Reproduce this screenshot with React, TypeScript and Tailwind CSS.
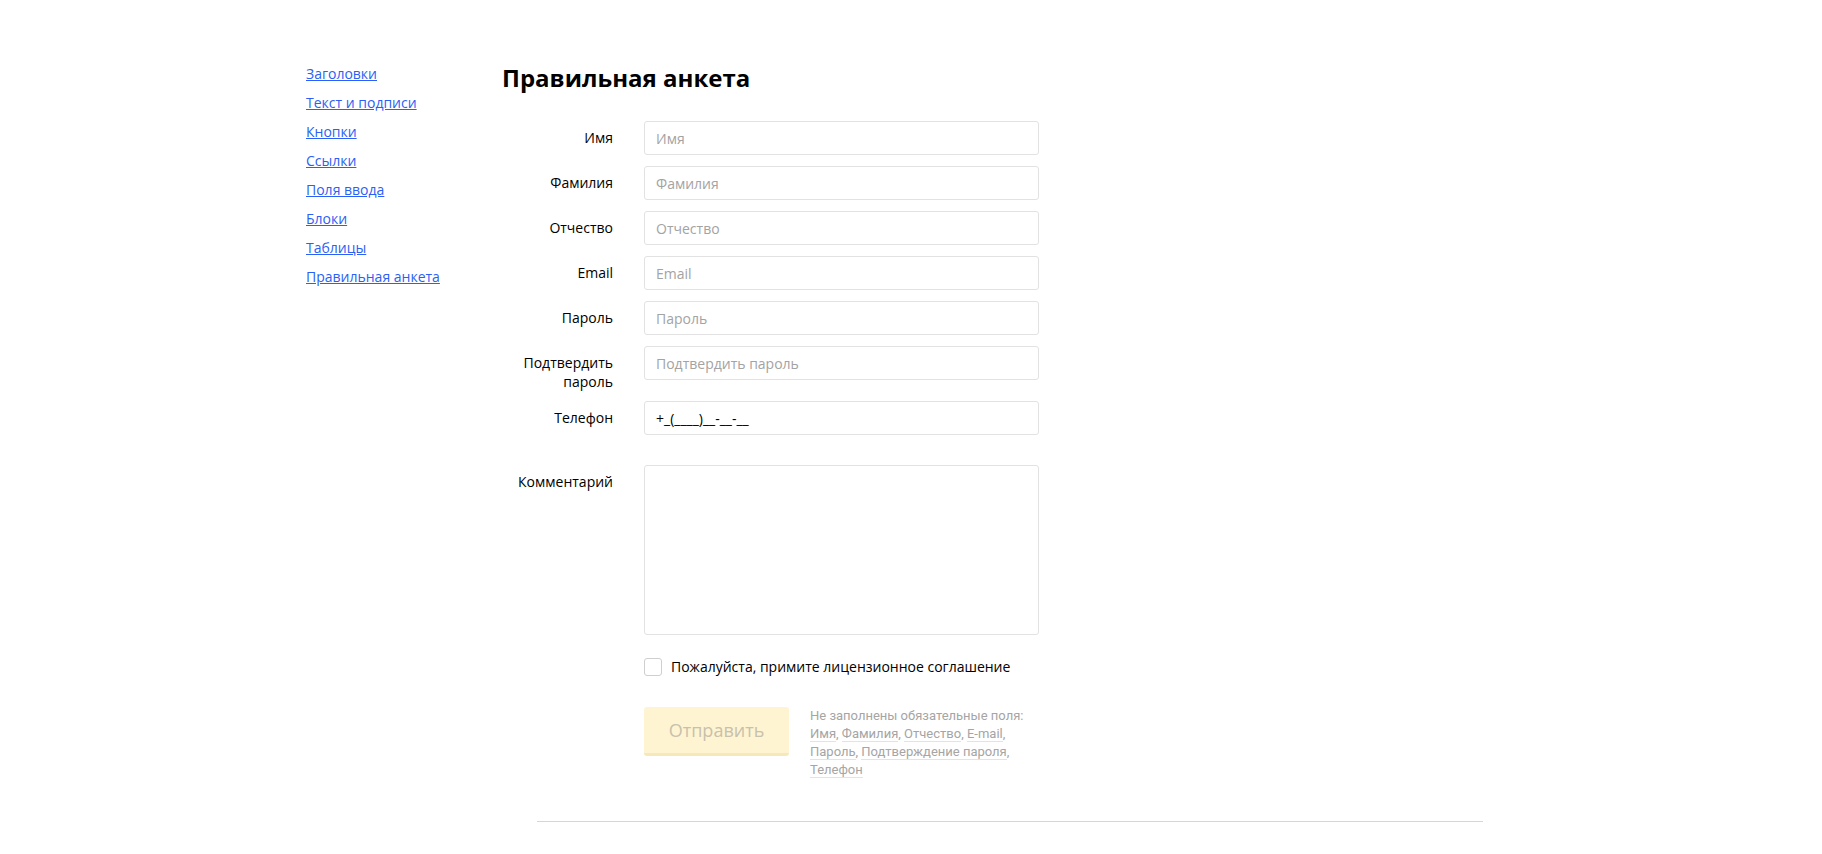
import { useState } from "react";

const navLinks = [
  "Заголовки",
  "Текст и подписи",
  "Кнопки",
  "Ссылки",
  "Поля ввода",
  "Блоки",
  "Таблицы",
  "Правильная анкета",
];

const fields = [
  { label: "Имя", placeholder: "Имя", type: "text" },
  { label: "Фамилия", placeholder: "Фамилия", type: "text" },
  { label: "Отчество", placeholder: "Отчество", type: "text" },
  { label: "Email", placeholder: "Email", type: "email" },
  { label: "Пароль", placeholder: "Пароль", type: "password" },
  { label: "Подтвердить пароль", placeholder: "Подтвердить пароль", type: "password" },
];

const missing = [
  ["Имя", "Фамилия", "Отчество", "E-mail"],
  ["Пароль", "Подтверждение пароля"],
  ["Телефон"],
];

function Row({ label, children }: { label: string; children: React.ReactNode }) {
  return (
    <div className="flex gap-[31px]">
      <label className="w-[111px] shrink-0 pt-[7px] text-right leading-[19px]">{label}</label>
      {children}
    </div>
  );
}

const inputClass =
  "h-[34px] w-[395px] rounded-[3px] border border-[#e2e2e2] bg-white px-[11px] text-[14px] text-black outline-none placeholder:text-[#a3a3a3]";

export default function App() {
  const [phone, setPhone] = useState("+_(____)__-__-__");
  const [agreed, setAgreed] = useState(false);

  return (
    <div className="min-h-screen bg-white font-['Open_Sans',sans-serif] text-[14px] text-black">
      <div className="flex pl-[306px] pt-[59px]">
        <nav className="flex w-[196px] shrink-0 flex-col">
          {navLinks.map((link) => (
            <a key={link} href="#" className="self-start leading-[29px] text-[#2b5ff5] underline">
              {link}
            </a>
          ))}
        </nav>

        <main className="-mt-px flex flex-col">
          <h1 className="mt-[4px] text-[24px] font-bold leading-[32px]">Правильная анкета</h1>

          <form className="mt-[27px] flex flex-col gap-[11px]" onSubmit={(e) => e.preventDefault()}>
            {fields.map((f) => (
              <Row key={f.label} label={f.label}>
                <input type={f.type} placeholder={f.placeholder} className={inputClass} />
              </Row>
            ))}

            <div className="-mt-px">
              <Row label="Телефон">
                <input
                  type="text"
                  value={phone}
                  onChange={(e) => setPhone(e.currentTarget.value)}
                  className={inputClass}
                />
              </Row>
            </div>

            <div className="mt-[19px]">
              <Row label="Комментарий">
                <textarea className="h-[170px] w-[395px] resize-none rounded-[3px] border border-[#e2e2e2] bg-white px-[11px] py-[7px] outline-none" />
              </Row>
            </div>

            <label className="mt-[12px] ml-[142px] flex items-center gap-[9px]">
              <input
                type="checkbox"
                checked={agreed}
                onChange={() => setAgreed(!agreed)}
                className="h-[18px] w-[18px] appearance-none rounded-[3px] border border-[#cfcfcf] bg-white"
              />
              <span className="leading-[18px]">Пожалуйста, примите лицензионное соглашение</span>
            </label>

            <div className="mt-[20px] ml-[142px] flex gap-[21px]">
              <button
                type="submit"
                disabled
                className="h-[49px] w-[145px] rounded-[3px] border-b-[3px] border-[#f6e8b8] bg-[#fff4d1] text-[18px] text-[#c7c1ad]"
              >
                Отправить
              </button>
              <div className="font-['Roboto',sans-serif] text-[13px] leading-[18px] text-[#a5a5a5]">
                <div>Не заполнены обязательные поля:</div>
                {missing.map((line, i) => (
                  <div key={i} className="whitespace-nowrap">
                    {line.map((w, j) => (
                      <span key={w}>
                        <span className="border-b border-[#e3e3e3]">{w}</span>
                        {j < line.length - 1 || i < missing.length - 1 ? ", " : ""}
                      </span>
                    ))}
                  </div>
                ))}
              </div>
            </div>
          </form>
        </main>
      </div>

      <div className="mt-[42px] ml-[537px] h-px w-[946px] bg-[#d6d6d6]" />
    </div>
  );
}
